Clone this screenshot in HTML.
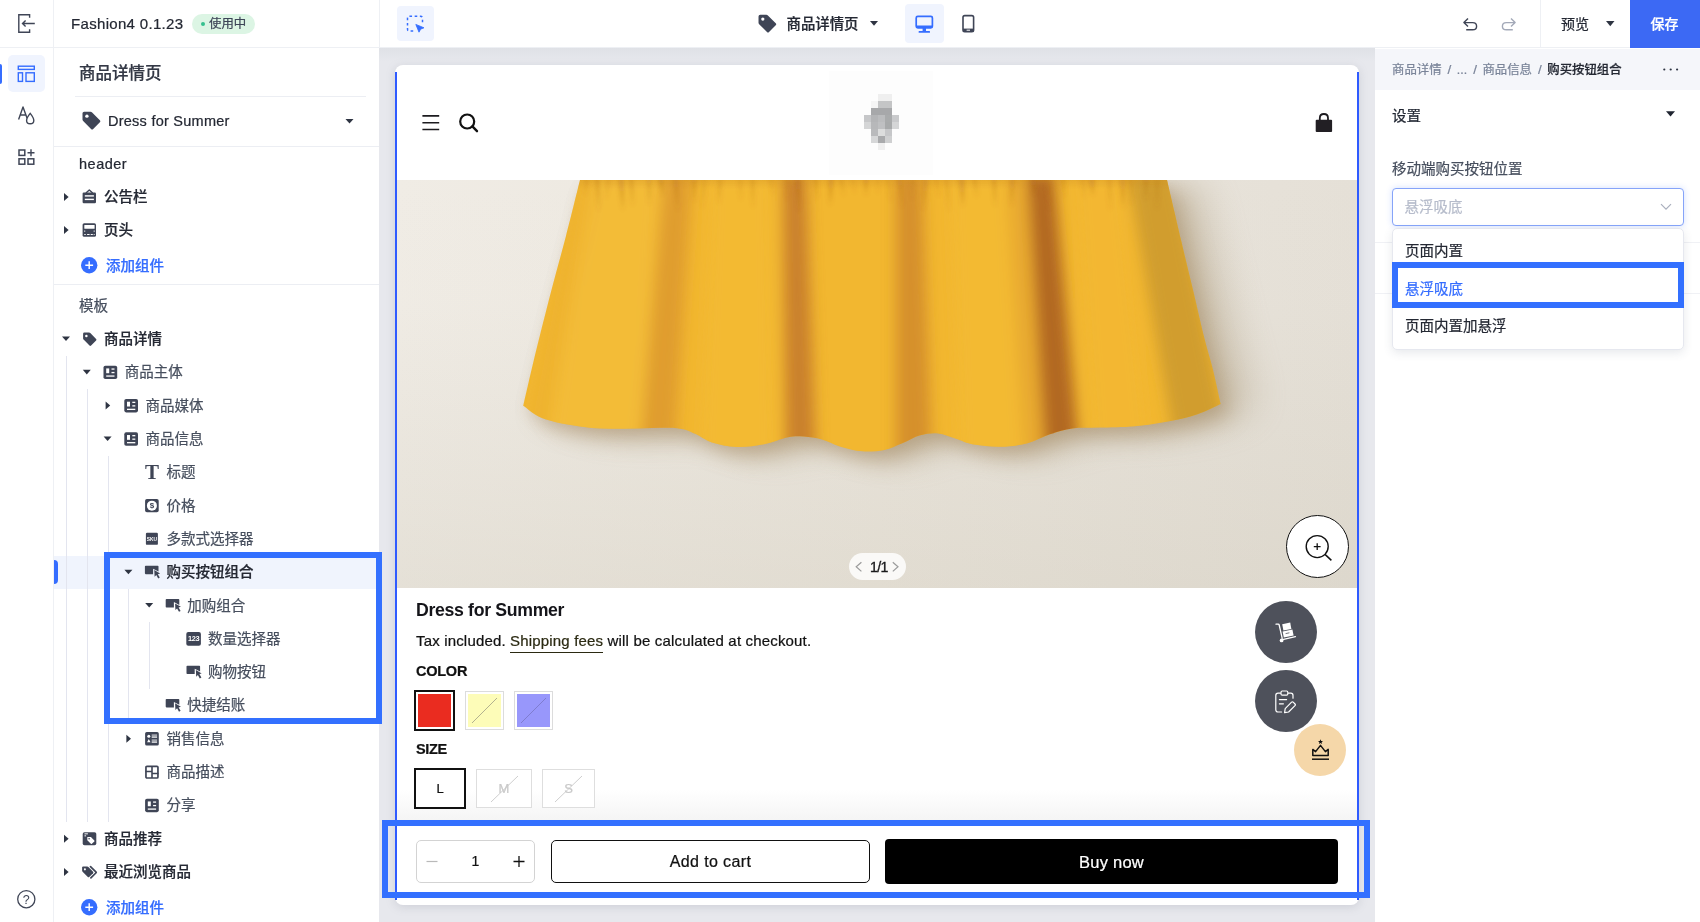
<!DOCTYPE html>
<html lang="zh-CN">
<head>
<meta charset="utf-8">
<title>商品详情页</title>
<style>
*{box-sizing:border-box;margin:0;padding:0}
html,body{width:1700px;height:922px;overflow:hidden;background:#fff}
body{-webkit-text-stroke:.22px currentColor;font-family:"Liberation Sans","Noto Sans CJK SC",sans-serif;color:#242833;font-size:14px;position:relative;-webkit-font-smoothing:antialiased}
#root{position:absolute;left:0;top:0;width:1700px;height:922px;will-change:transform;transform:translateZ(0)}
.abs{position:absolute}
.t{position:absolute;white-space:nowrap;line-height:20px;height:20px}
svg{position:absolute;overflow:visible}
/* ---------- shell ---------- */
#topbar{left:0;top:0;width:1700px;height:48px;background:#fff;border-bottom:1px solid #eef0f4;z-index:5}
#rail{left:0;top:48px;width:54px;height:874px;background:#fff;border-right:1px solid #eef0f4}
#panel{left:54px;top:48px;width:325px;height:874px;background:#fff}
#canvas{left:379px;top:48px;width:996px;height:874px;background:#e7e8ed}
#right{left:1375px;top:48px;width:325px;height:874px;background:#fff}
.hl{position:absolute;border:6px solid #3370ff;pointer-events:none}
/* tree */
.row{position:absolute;left:54px;width:325px;height:33px}
.row .t{top:6.5px;font-size:14.5px}
.lbl{color:#242833}
.g{position:absolute;width:1px;background:#e3e5ef}
</style>
</head>
<body>
<div id="root">
<!-- ================= TOP BAR ================= -->
<div id="topbar" class="abs">
  <div class="abs" style="left:53px;top:0;width:1px;height:48px;background:#eef0f4"></div>
  <div class="abs" style="left:379px;top:0;width:1px;height:48px;background:#eef0f4"></div>
  <div class="t" id="ttl" style="left:71px;top:14px;font-size:15px;color:#242833;letter-spacing:.32px">Fashion4 0.1.23</div>
  <div class="abs" id="badge" style="left:192px;top:14px;width:63px;height:20px;border-radius:10px;background:#dcf5e4"></div>
  <div class="abs" style="left:200.5px;top:22px;width:4px;height:4px;border-radius:2px;background:#35c08e"></div>
  <div class="t" style="left:209px;top:13.5px;font-size:12.4px;color:#3d4557">使用中</div>
  <div class="abs" style="left:397px;top:5.5px;width:37px;height:35.5px;border-radius:4px;background:#f0f4fe"></div>
  <div class="t" style="left:786.5px;top:13.5px;font-size:14.4px;font-weight:500;color:#242833">商品详情页</div>
  <div class="abs" style="left:905px;top:4px;width:39px;height:39px;border-radius:4px;background:#f0f4fe"></div>
  <div class="abs" style="left:1540px;top:0;width:1px;height:48px;background:#eef0f4"></div>
  <div class="t" style="left:1561px;top:14px;font-size:14px;color:#242833">预览</div>
  <div class="abs" style="left:1630px;top:0;width:70px;height:48px;background:#3c69f4"></div>
  <div class="t" style="left:1650.5px;top:14px;font-size:14px;font-weight:500;color:#fff">保存</div>
<!--TOPICONS-->
<svg style="left:17px;top:13px" width="20" height="22" viewBox="17 13 20 22"><path d="M29.6 17.8V14.8H18.8V32.2H29.6V29.2" fill="none" stroke="#3f4556" stroke-width="1.4"/><path d="M34.8 23.5H22.6M25.6 20.4L22.5 23.5L25.6 26.6" fill="none" stroke="#3f4556" stroke-width="1.4"/></svg>
<svg style="left:405px;top:14px" width="20" height="20" viewBox="405 14 20 20"><path d="M413.6 31.1H409.6Q407.5 31.1 407.5 29V18.3Q407.5 16.2 409.6 16.2H420.4Q422.5 16.2 422.5 18.3V23.4" fill="none" stroke="#356dff" stroke-width="1.5" stroke-dasharray="2.6 2.6" stroke-dashoffset="-.4"/><path d="M415.8 24.4L424 27.8L420.6 29.2L419 32.2Z" fill="#f0f4fe" stroke="#f0f4fe" stroke-width="3" stroke-linejoin="round"/><path d="M415.8 24.4L424 27.8L420.6 29.2L419 32.2Z" fill="#356dff" stroke="#356dff" stroke-width=".8" stroke-linejoin="round"/></svg>
<svg style="left:757px;top:13px" width="20.26" height="20.26" viewBox="0 -0.22 16 16"><path d="M1.2 2.6Q1.2 1.2 2.6 1.2H7.4Q8.1 1.2 8.6 1.7L14.8 7.9Q15.6 8.7 14.8 9.5L9.5 14.8Q8.7 15.6 7.9 14.8L1.7 8.6Q1.2 8.1 1.2 7.4Z" fill="#3f4556"/><circle cx="4.6" cy="4.6" r="1.3" fill="#fff"/></svg>
<svg style="left:870px;top:21px" width="8" height="5" viewBox="0 0 8 5"><path d="M0 0H8L4 4.8Z" fill="#2e3442"/></svg>
<svg style="left:915px;top:14.5px" width="19" height="19" viewBox="915 14.5 19 19"><rect x="916.2" y="15.8" width="16.2" height="11.6" rx="1.6" fill="none" stroke="#356dff" stroke-width="1.7"/><rect x="916.2" y="25" width="16.2" height="2.4" fill="#356dff"/><rect x="922.6" y="27.4" width="3.4" height="3.4" fill="#356dff"/><rect x="918.6" y="30.6" width="11.4" height="1.7" rx=".6" fill="#356dff"/></svg>
<svg style="left:961px;top:14px" width="14" height="20" viewBox="961 14 14 20"><rect x="963" y="15.6" width="10.6" height="16.2" rx="1.7" fill="none" stroke="#3f4556" stroke-width="1.6"/><rect x="963" y="28.6" width="10.6" height="3.2" fill="#3f4556"/><rect x="966.6" y="29.7" width="3.4" height="1" fill="#fff"/></svg>
<svg style="left:1462px;top:16px" width="17" height="16" viewBox="0 0 17 16"><path d="M4.2 13.8H10.6Q14.6 13.8 14.6 10.2Q14.6 6.6 10.6 6.6H2.4M6 2.4L1.9 6.6L6 10.6" fill="none" stroke="#3f4556" stroke-width="1.4" stroke-linejoin="round"/></svg>
<svg style="left:1500px;top:16px" width="17" height="16" viewBox="0 0 17 16"><path d="M12.8 13.8H6.4Q2.4 13.8 2.4 10.2Q2.4 6.6 6.4 6.6H14.6M11 2.4L15.1 6.6L11 10.6" fill="none" stroke="#a3a9b8" stroke-width="1.4" stroke-linejoin="round"/></svg>
<svg style="left:1606px;top:21px" width="8.5" height="5.5" viewBox="0 0 8 5"><path d="M0 0H8L4 4.8Z" fill="#2e3442"/></svg>
<!--/TOPICONS-->
</div>

<!-- ================= LEFT RAIL ================= -->
<div id="rail" class="abs">
  <div class="abs" style="left:0;top:16px;width:2px;height:20px;background:#356dff;border-radius:0 2px 2px 0"></div>
  <div class="abs" style="left:8px;top:7px;width:37px;height:37px;border-radius:5px;background:#f0f4fe"></div>
</div>

<div class="abs" style="left:0;top:0;width:0;height:0"><!--RAILICONS-->
<svg style="left:17px;top:65px" width="19" height="18" viewBox="17 65 19 18"><rect x="18.3" y="66.2" width="16" height="3.2" fill="none" stroke="#356dff" stroke-width="1.4"/><rect x="18.3" y="72.8" width="4.2" height="8.6" fill="none" stroke="#356dff" stroke-width="1.4"/><rect x="26" y="72.8" width="8.3" height="8.6" fill="none" stroke="#356dff" stroke-width="1.4"/></svg>
<svg style="left:17px;top:105px" width="19" height="21" viewBox="17 105 19 21"><path d="M18.6 119.4L23 107L27.2 118.6M20.2 115H25.8" fill="none" stroke="#3f4556" stroke-width="1.4" stroke-linejoin="round"/><path d="M30.2 113.4Q26.6 117.8 26.6 120.4Q26.6 123.8 30.2 123.8Q33.8 123.8 33.8 120.4Q33.8 117.8 30.2 113.4Z" fill="#fff" stroke="#3f4556" stroke-width="1.4"/></svg>
<svg style="left:17px;top:148px" width="19" height="18" viewBox="17 148 19 18"><rect x="19" y="150" width="5.8" height="5.4" fill="none" stroke="#3f4556" stroke-width="1.5"/><rect x="19" y="158.8" width="5.8" height="5.4" fill="none" stroke="#3f4556" stroke-width="1.5"/><rect x="28" y="158.8" width="5.8" height="5.4" fill="none" stroke="#3f4556" stroke-width="1.5"/><path d="M31 149.2V156.2M27.5 152.7H34.5" stroke="#3f4556" stroke-width="1.4"/></svg>
<svg style="left:16px;top:889px" width="21" height="21" viewBox="16 889 21 21"><circle cx="26.3" cy="899.2" r="8.6" fill="none" stroke="#3f4556" stroke-width="1.3"/><text x="26.3" y="903.6" text-anchor="middle" font-size="12.5" fill="#3f4556" font-family="Liberation Sans,sans-serif">?</text></svg>
<!--/RAILICONS--></div>

<!-- ================= LEFT PANEL ================= -->
<div id="panel" class="abs"></div>
<div id="panelc" class="abs" style="left:0;top:0;width:0;height:0">
<div class="t" style="left:79px;top:63px;font-size:16.5px;font-weight:500;color:#333845">商品详情页</div>
<div class="abs" style="left:75px;top:96px;width:291px;height:1px;background:#eceef3"></div>
<svg style="left:80px;top:109px" width="21.4" height="21.4" viewBox="-0.27 -0.45 16 16"><path d="M1.6 2.8Q1.6 1.6 2.8 1.6H7.6Q8.3 1.6 8.8 2.1L14.6 7.9Q15.4 8.7 14.6 9.5L9.6 14.5Q8.8 15.3 8 14.5L2.1 8.6Q1.6 8.1 1.6 7.4Z" fill="#3f4556"/><circle cx="4.9" cy="4.9" r="1.25" fill="#fff"/></svg>
<div class="t" style="left:108px;top:111px;font-size:14.5px;color:#242833;letter-spacing:.25px">Dress for Summer</div>
<svg style="left:345px;top:119px" width="10" height="10" viewBox="0 0 10 10"><path transform="translate(0.50,0.00)" d="M0 0H8L4 4.6Z" fill="#2e3442"/></svg>
<div class="abs" style="left:54px;top:146px;width:325px;height:1px;background:#eceef3"></div>
<div class="t" style="left:79px;top:153.5px;font-size:14.5px;color:#242833;letter-spacing:.5px">header</div>
<svg style="left:64px;top:193px" width="10" height="10" viewBox="0 0 10 10"><path transform="translate(0.00,0.00)" d="M0 0V8L4.6 4Z" fill="#2e3442"/></svg>
<svg style="left:81px;top:189px" width="18" height="18" viewBox="0 0 18 18"><g transform="translate(0.50,0.00)"><path d="M4.4 4L7.8 1L11.2 4" fill="none" stroke="#3f4556" stroke-width="1.4" stroke-linejoin="round"/><rect x="1.1" y="3.5" width="13.4" height="10.8" rx="1.2" fill="#3f4556"/><rect x="3.3" y="6.2" width="9.1" height="1.4" fill="#fff"/><rect x="3.3" y="9.7" width="9.1" height="1.4" fill="#fff"/></g></svg>
<div class="t" style="left:104.0px;top:187.0px;font-size:14.5px;font-weight:500;color:#242833">公告栏</div>
<svg style="left:64px;top:226px" width="10" height="10" viewBox="0 0 10 10"><path transform="translate(0.00,0.00)" d="M0 0V8L4.6 4Z" fill="#2e3442"/></svg>
<svg style="left:81px;top:222px" width="18" height="18" viewBox="0 0 18 18"><g transform="translate(0.50,0.00)"><rect x="1.1" y="1.2" width="13.4" height="13.6" rx="1.6" fill="#3f4556"/><rect x="2.8" y="3.1" width="10.3" height="3.7" rx=".5" fill="#fff"/><rect x="2.8" y="8.5" width=".9" height="1.3" fill="#fff"/><rect x="12.2" y="8.5" width=".9" height="1.3" fill="#fff"/><rect x="2.8" y="12" width="1.4" height="1" fill="#fff"/><rect x="5.6" y="12" width="2.5" height="1" fill="#fff"/><rect x="9.2" y="12" width="2.1" height="1" fill="#fff"/><rect x="12.2" y="12" width=".9" height="1" fill="#fff"/></g></svg>
<div class="t" style="left:104.0px;top:220.0px;font-size:14.5px;font-weight:500;color:#242833">页头</div>
<svg style="left:81px;top:257.4px" width="16.4" height="16.4" viewBox="0 0 16 16"><circle cx="8" cy="8" r="8" fill="#356dff"/><path d="M8 4.2V11.8M4.2 8H11.8" stroke="#fff" stroke-width="1.4"/></svg>
<div class="t" style="left:106px;top:255.7px;font-size:14.5px;font-weight:500;color:#356dff">添加组件</div>
<div class="abs" style="left:54px;top:284px;width:325px;height:1px;background:#eceef3"></div>
<div class="t" style="left:79px;top:295.6px;font-size:14.5px;color:#474f5e">模板</div>
<div class="abs" style="left:54px;top:556px;width:325px;height:33px;background:#f0f4fd"></div>
<div class="abs" style="left:54px;top:560px;width:4px;height:24px;background:#356dff;border-radius:0 4px 4px 0"></div>
<div class="g" style="left:66.0px;top:356px;height:466px"></div>
<div class="g" style="left:86.8px;top:389px;height:433px"></div>
<div class="g" style="left:107.6px;top:456px;height:366px"></div>
<div class="g" style="left:128.4px;top:589px;height:129px"></div>
<div class="g" style="left:149.2px;top:622px;height:67px"></div>
<svg style="left:62px;top:336px" width="10" height="10" viewBox="0 0 10 10"><path transform="translate(0.00,0.50)" d="M0 0H8L4 4.6Z" fill="#2e3442"/></svg>
<svg style="left:81px;top:331px" width="18" height="18" viewBox="0 0 18 18"><g transform="translate(0.50,0.00)"><path d="M1.6 2.8Q1.6 1.6 2.8 1.6H7.6Q8.3 1.6 8.8 2.1L14.6 7.9Q15.4 8.7 14.6 9.5L9.6 14.5Q8.8 15.3 8 14.5L2.1 8.6Q1.6 8.1 1.6 7.4Z" fill="#3f4556"/><circle cx="4.9" cy="4.9" r="1.25" fill="#fff"/></g></svg>
<div class="t" style="left:104.0px;top:329.0px;font-size:14.5px;font-weight:500;color:#242833">商品详情</div>
<svg style="left:82px;top:369px" width="10" height="10" viewBox="0 0 10 10"><path transform="translate(0.80,0.81)" d="M0 0H8L4 4.6Z" fill="#2e3442"/></svg>
<svg style="left:102px;top:364px" width="18" height="18" viewBox="0 0 18 18"><g transform="translate(0.30,0.31)"><rect x="1.2" y="1.4" width="13.7" height="13.4" rx="1.8" fill="#3f4556"/><rect x="3.9" y="4.1" width="3" height="4.8" fill="#fff"/><rect x="9.2" y="4.1" width="3" height="1.3" fill="#fff"/><rect x="9.2" y="7.6" width="3" height="1.3" fill="#fff"/><rect x="3.9" y="11.1" width="8.3" height="1.3" fill="#fff"/></g></svg>
<div class="t" style="left:124.8px;top:362.3px;font-size:14.5px;color:#474f5e">商品主体</div>
<svg style="left:105px;top:401px" width="10" height="10" viewBox="0 0 10 10"><path transform="translate(0.60,0.62)" d="M0 0V8L4.6 4Z" fill="#2e3442"/></svg>
<svg style="left:123px;top:397px" width="18" height="18" viewBox="0 0 18 18"><g transform="translate(0.10,0.62)"><rect x="1.2" y="1.4" width="13.7" height="13.4" rx="1.8" fill="#3f4556"/><rect x="3.9" y="4.1" width="3" height="4.8" fill="#fff"/><rect x="9.2" y="4.1" width="3" height="1.3" fill="#fff"/><rect x="9.2" y="7.6" width="3" height="1.3" fill="#fff"/><rect x="3.9" y="11.1" width="8.3" height="1.3" fill="#fff"/></g></svg>
<div class="t" style="left:145.6px;top:395.6px;font-size:14.5px;color:#474f5e">商品媒体</div>
<svg style="left:103px;top:436px" width="10" height="10" viewBox="0 0 10 10"><path transform="translate(0.60,0.43)" d="M0 0H8L4 4.6Z" fill="#2e3442"/></svg>
<svg style="left:123px;top:430px" width="18" height="18" viewBox="0 0 18 18"><g transform="translate(0.10,0.93)"><rect x="1.2" y="1.4" width="13.7" height="13.4" rx="1.8" fill="#3f4556"/><rect x="3.9" y="4.1" width="3" height="4.8" fill="#fff"/><rect x="9.2" y="4.1" width="3" height="1.3" fill="#fff"/><rect x="9.2" y="7.6" width="3" height="1.3" fill="#fff"/><rect x="3.9" y="11.1" width="8.3" height="1.3" fill="#fff"/></g></svg>
<div class="t" style="left:145.6px;top:428.9px;font-size:14.5px;color:#474f5e">商品信息</div>
<svg style="left:143px;top:464px" width="18" height="18" viewBox="0 0 18 18"><g transform="translate(0.90,0.24)"><text x="8" y="15" font-size="21" font-weight="700" text-anchor="middle" fill="#3f4556" font-family="Liberation Serif,serif">T</text></g></svg>
<div class="t" style="left:166.4px;top:462.2px;font-size:14.5px;color:#474f5e">标题</div>
<svg style="left:143px;top:497px" width="18" height="18" viewBox="0 0 18 18"><g transform="translate(0.90,0.55)"><rect x="1.2" y="1.5" width="13.6" height="13.2" rx="1.8" fill="#3f4556"/><circle cx="8" cy="8.1" r="5" fill="#fff"/><text x="8" y="10.9" font-size="8" font-weight="700" text-anchor="middle" fill="#3f4556" font-family="Liberation Sans,sans-serif">$</text></g></svg>
<div class="t" style="left:166.4px;top:495.6px;font-size:14.5px;color:#474f5e">价格</div>
<svg style="left:143px;top:530px" width="18" height="18" viewBox="0 0 18 18"><g transform="translate(0.90,0.86)"><rect x="2" y="2" width="12" height="12" rx="1.2" fill="#3f4556"/><text x="8" y="9.7" font-size="4.8" font-weight="700" text-anchor="middle" fill="#fff" font-family="Liberation Sans,sans-serif">SKU</text></g></svg>
<div class="t" style="left:166.4px;top:528.9px;font-size:14.5px;color:#474f5e">多款式选择器</div>
<svg style="left:124px;top:569px" width="10" height="10" viewBox="0 0 10 10"><path transform="translate(0.40,0.67)" d="M0 0H8L4 4.6Z" fill="#2e3442"/></svg>
<svg style="left:143px;top:564px" width="18" height="18" viewBox="0 0 18 18"><g transform="translate(0.90,0.17)"><path d="M1.8 1.6H13.8Q14.6 1.6 14.6 2.4V7.4L9.2 4.6V10H1.8Q1 10 1 9.2V2.4Q1 1.6 1.8 1.6Z" fill="#3f4556"/><path d="M10.4 5.9L16.2 9.3L13.9 10L15.9 13.4L14.3 14.3L12.4 10.9L10.7 12.6Z" fill="#3f4556"/></g></svg>
<div class="t" style="left:166.4px;top:562.2px;font-size:14.5px;font-weight:500;color:#242833">购买按钮组合</div>
<svg style="left:145px;top:602px" width="10" height="10" viewBox="0 0 10 10"><path transform="translate(0.20,0.98)" d="M0 0H8L4 4.6Z" fill="#2e3442"/></svg>
<svg style="left:164px;top:597px" width="18" height="18" viewBox="0 0 18 18"><g transform="translate(0.70,0.48)"><path d="M1.8 1.6H13.8Q14.6 1.6 14.6 2.4V7.4L9.2 4.6V10H1.8Q1 10 1 9.2V2.4Q1 1.6 1.8 1.6Z" fill="#3f4556"/><path d="M10.4 5.9L16.2 9.3L13.9 10L15.9 13.4L14.3 14.3L12.4 10.9L10.7 12.6Z" fill="#3f4556"/></g></svg>
<div class="t" style="left:187.2px;top:595.5px;font-size:14.5px;color:#474f5e">加购组合</div>
<svg style="left:185px;top:630px" width="18" height="18" viewBox="0 0 18 18"><g transform="translate(0.50,0.79)"><rect x=".8" y="1.2" width="14.6" height="13.7" rx="2" fill="#3f4556"/><text x="8.1" y="10.7" font-size="7.4" font-weight="700" text-anchor="middle" fill="#fff" font-family="Liberation Sans,sans-serif" letter-spacing="-.3">123</text></g></svg>
<div class="t" style="left:208.0px;top:628.8px;font-size:14.5px;color:#474f5e">数量选择器</div>
<svg style="left:185px;top:664px" width="18" height="18" viewBox="0 0 18 18"><g transform="translate(0.50,0.10)"><path d="M1.8 1.6H13.8Q14.6 1.6 14.6 2.4V7.4L9.2 4.6V10H1.8Q1 10 1 9.2V2.4Q1 1.6 1.8 1.6Z" fill="#3f4556"/><path d="M10.4 5.9L16.2 9.3L13.9 10L15.9 13.4L14.3 14.3L12.4 10.9L10.7 12.6Z" fill="#3f4556"/></g></svg>
<div class="t" style="left:208.0px;top:662.1px;font-size:14.5px;color:#474f5e">购物按钮</div>
<svg style="left:164px;top:697px" width="18" height="18" viewBox="0 0 18 18"><g transform="translate(0.70,0.41)"><path d="M1.8 1.6H13.8Q14.6 1.6 14.6 2.4V7.4L9.2 4.6V10H1.8Q1 10 1 9.2V2.4Q1 1.6 1.8 1.6Z" fill="#3f4556"/><path d="M10.4 5.9L16.2 9.3L13.9 10L15.9 13.4L14.3 14.3L12.4 10.9L10.7 12.6Z" fill="#3f4556"/></g></svg>
<div class="t" style="left:187.2px;top:695.4px;font-size:14.5px;color:#474f5e">快捷结账</div>
<svg style="left:126px;top:734px" width="10" height="10" viewBox="0 0 10 10"><path transform="translate(0.40,0.72)" d="M0 0V8L4.6 4Z" fill="#2e3442"/></svg>
<svg style="left:143px;top:730px" width="18" height="18" viewBox="0 0 18 18"><g transform="translate(0.90,0.72)"><rect x="1.2" y="1.4" width="13.7" height="13.4" rx="1.6" fill="#3f4556"/><circle cx="4.9" cy="5.5" r="1.5" fill="#fff"/><path d="M3.2 11.6L4.9 8.4L6.6 11.6Z" fill="#fff"/><rect x="7.8" y="3.9" width="5.4" height=".9" fill="#fff"/><rect x="7.8" y="5.7" width="5.4" height="1.3" fill="#fff"/><rect x="7.8" y="8.9" width="5.4" height=".9" fill="#fff"/><rect x="7.8" y="10.7" width="5.4" height="1.3" fill="#fff"/></g></svg>
<div class="t" style="left:166.4px;top:728.7px;font-size:14.5px;color:#474f5e">销售信息</div>
<svg style="left:143px;top:764px" width="18" height="18" viewBox="0 0 18 18"><g transform="translate(0.90,0.03)"><rect x="2.05" y="2.25" width="12" height="11.7" rx="1" fill="#fff" stroke="#3f4556" stroke-width="1.7"/><path d="M8.1 2.2V14M1.6 7.4H8.1M8.1 9.4H14.6" stroke="#3f4556" stroke-width="1.6" fill="none"/></g></svg>
<div class="t" style="left:166.4px;top:762.0px;font-size:14.5px;color:#474f5e">商品描述</div>
<svg style="left:143px;top:797px" width="18" height="18" viewBox="0 0 18 18"><g transform="translate(0.90,0.34)"><rect x="1.2" y="1.4" width="13.7" height="13.4" rx="1.8" fill="#3f4556"/><rect x="3.9" y="4.1" width="3" height="4.8" fill="#fff"/><rect x="9.2" y="4.1" width="3" height="1.3" fill="#fff"/><rect x="9.2" y="7.6" width="3" height="1.3" fill="#fff"/><rect x="3.9" y="11.1" width="8.3" height="1.3" fill="#fff"/></g></svg>
<div class="t" style="left:166.4px;top:795.3px;font-size:14.5px;color:#474f5e">分享</div>
<svg style="left:64px;top:834px" width="10" height="10" viewBox="0 0 10 10"><path transform="translate(0.00,0.65)" d="M0 0V8L4.6 4Z" fill="#2e3442"/></svg>
<svg style="left:81px;top:830px" width="18" height="18" viewBox="0 0 18 18"><g transform="translate(0.50,0.65)"><rect x="1.2" y="1.5" width="13.6" height="13.2" rx="1.8" fill="#3f4556"/><path d="M3 3.2H6.4M3 5.2H4.6" stroke="#fff" stroke-width="1"/><path d="M5.8 6.4H9.4L12.8 9.8Q13.2 10.3 12.8 10.8L10.4 13.1Q9.9 13.5 9.4 13.1L5.8 9.6Z" fill="#fff"/><circle cx="7.6" cy="8.1" r=".8" fill="#3f4556"/></g></svg>
<div class="t" style="left:104.0px;top:828.7px;font-size:14.5px;font-weight:500;color:#242833">商品推荐</div>
<svg style="left:64px;top:867px" width="10" height="10" viewBox="0 0 10 10"><path transform="translate(0.00,0.96)" d="M0 0V8L4.6 4Z" fill="#2e3442"/></svg>
<svg style="left:81px;top:863px" width="18" height="18" viewBox="0 0 18 18"><g transform="translate(0.50,0.96)"><path d="M.6 3.6Q.6 2.6 1.6 2.6H5.8Q6.4 2.6 6.9 3.1L11.6 7.8Q12.2 8.5 11.6 9.2L7.7 13.1Q7 13.7 6.3 13.1L1.1 7.9Q.6 7.4 .6 6.8Z" fill="#3f4556"/><circle cx="3.4" cy="5.4" r="1.05" fill="#fff"/><path d="M9 2.6L14.6 8.2Q14.9 8.5 14.6 8.8L9.4 14" fill="none" stroke="#3f4556" stroke-width="1.7" stroke-linecap="round" stroke-linejoin="round"/></g></svg>
<div class="t" style="left:104.0px;top:862.0px;font-size:14.5px;font-weight:500;color:#242833">最近浏览商品</div>
<svg style="left:81px;top:899.4px" width="16.4" height="16.4" viewBox="0 0 16 16"><circle cx="8" cy="8" r="8" fill="#356dff"/><path d="M8 4.2V11.8M4.2 8H11.8" stroke="#fff" stroke-width="1.4"/></svg>
<div class="t" style="left:106px;top:897.7px;font-size:14.5px;font-weight:500;color:#356dff">添加组件</div>
<div class="hl" style="left:104px;top:552px;width:278px;height:172px;z-index:6"></div>
</div>

<!-- ================= CANVAS ================= -->
<div id="canvas" class="abs"></div>
<div class="abs" style="left:379px;top:48px;width:996px;height:14px;background:linear-gradient(#dfe1e6,rgba(231,232,237,0))"></div>
<div id="cv" class="abs" style="left:0;top:0;width:0;height:0;font-family:'Liberation Sans',sans-serif">
<!-- frame -->
<div class="abs" id="frame" style="left:395px;top:65px;width:964px;height:840px;background:#fff;border-radius:8px;box-shadow:0 2px 10px rgba(120,125,140,.22)"></div>
<div class="abs" style="left:395px;top:72px;width:2px;height:828px;background:#2f5bff"></div>
<div class="abs" style="left:1357px;top:72px;width:2px;height:828px;background:#2f5bff"></div>
<!-- fade above sticky bar -->
<div class="abs" style="left:397px;top:790px;width:960px;height:32px;background:linear-gradient(rgba(246,246,246,0),#f4f4f4)"></div>
<!-- store header -->
<div class="abs" style="left:829px;top:71px;width:104px;height:104px;background:#fdfdfd"></div>
<svg style="left:421px;top:114px" width="20" height="18" viewBox="421 114 20 18"><path d="M422.4 115.9H439.2M422.4 122.7H439.2M422.4 129.5H439.2" stroke="#1c1b1f" stroke-width="1.6"/></svg>
<svg style="left:457px;top:111px" width="22" height="22" viewBox="457 111 22 22"><circle cx="467.2" cy="121.5" r="7" fill="none" stroke="#111" stroke-width="2.2"/><path d="M472.4 126.4L477 131.2" stroke="#111" stroke-width="2.4" stroke-linecap="round"/></svg>
<svg id="logo" style="left:864.3px;top:94.2px" width="35" height="56" viewBox="0 0 5 8" shape-rendering="crispEdges">
<rect x="2" y="0" width="2" height="1" fill="#efefef"/>
<rect x="1" y="1" width="1" height="1" fill="#f5f5f5"/><rect x="2" y="1" width="2" height="1" fill="#c4c5c6"/>
<rect x="1" y="2" width="3" height="1" fill="#a7a8aa"/>
<rect x="0" y="3" width="1" height="1" fill="#c6c7c9"/><rect x="1" y="3" width="1" height="1" fill="#b4b5b7"/><rect x="2" y="3" width="1" height="1" fill="#bbbcbe"/><rect x="3" y="3" width="1" height="1" fill="#a9abac"/><rect x="4" y="3" width="1" height="1" fill="#c9cacc"/>
<rect x="0" y="4" width="1" height="1" fill="#d4d5d6"/><rect x="1" y="4" width="1" height="1" fill="#b7b8ba"/><rect x="2" y="4" width="1" height="1" fill="#bfc0c2"/><rect x="3" y="4" width="1" height="1" fill="#a8aaab"/><rect x="4" y="4" width="1" height="1" fill="#d5d6d7"/>
<rect x="1" y="5" width="1" height="1" fill="#b9babc"/><rect x="2" y="5" width="1" height="1" fill="#dcdddd"/><rect x="3" y="5" width="1" height="1" fill="#c6c7c9"/>
<rect x="1" y="6" width="1" height="1" fill="#d6d7d8"/><rect x="2" y="6" width="1" height="1" fill="#a9aaac"/><rect x="3" y="6" width="1" height="1" fill="#cfd0d1"/>
<rect x="2" y="7" width="1" height="1" fill="#efefef"/>
</svg>
<svg style="left:1313px;top:111px" width="22" height="23" viewBox="1313 111 22 23"><path d="M1319.8 120.5V118.2Q1319.8 114 1323.9 114Q1328 114 1328 118.2V120.5" fill="none" stroke="#1d1b20" stroke-width="1.8"/><rect x="1315.7" y="119.8" width="16.4" height="12.3" rx="1" fill="#221f24"/></svg>
<!-- product image -->
<!--DRESS-->
<svg id="dress" style="left:397px;top:180px" width="960" height="408" viewBox="397 180 960 408">
<defs>
<linearGradient id="bgx" x1="0" y1="0" x2="1" y2="0"><stop offset="0" stop-color="#f0ece5"/><stop offset=".5" stop-color="#ebe6dd"/><stop offset="1" stop-color="#e5e0d7"/></linearGradient>
<linearGradient id="bgy" x1="0" y1="0" x2="0" y2="1"><stop offset="0" stop-color="#c8c2b2" stop-opacity="0"/><stop offset=".3" stop-color="#c8c2b2" stop-opacity="0.02"/><stop offset="1" stop-color="#c8c2b2" stop-opacity=".28"/></linearGradient>
<linearGradient id="topg" x1="0" y1="0" x2="0" y2="1"><stop offset="0" stop-color="#9a5218" stop-opacity=".12"/><stop offset="1" stop-color="#9a5218" stop-opacity="0"/></linearGradient>
<filter id="b6" x="-20%" y="-20%" width="140%" height="140%"><feGaussianBlur stdDeviation="7"/></filter>
<filter id="b3" x="-20%" y="-20%" width="140%" height="140%"><feGaussianBlur stdDeviation="2.2"/></filter>
<filter id="b18" x="-20%" y="-20%" width="140%" height="140%"><feGaussianBlur stdDeviation="18"/></filter>
<filter id="b10" x="-20%" y="-20%" width="140%" height="140%"><feGaussianBlur stdDeviation="11"/></filter>
<clipPath id="dclip"><path d="M580,180L1167,180C1169.3,190.0 1176.7,221.7 1181.0,240.0C1185.3,258.3 1189.2,274.2 1193.0,290.0C1196.8,305.8 1200.2,321.7 1203.5,335.0C1206.8,348.3 1210.2,358.5 1213.0,370.0C1215.8,381.5 1219.3,398.2 1220.6,403.9C1216.7,405.6 1205.7,411.4 1197.4,414.2C1189.1,417.0 1181.0,418.9 1170.6,420.9C1160.2,422.9 1146.7,425.1 1134.8,426.2C1122.9,427.3 1109.4,427.2 1099.0,427.6C1088.6,428.0 1080.4,427.4 1072.2,428.5C1064.0,429.6 1057.4,431.9 1049.9,434.3C1042.5,436.8 1035.7,441.1 1027.5,443.2C1019.3,445.3 1009.6,446.6 1000.7,446.8C991.8,447.0 981.4,445.9 973.9,444.6C966.4,443.3 962.0,440.7 956.0,438.8C950.0,436.9 944.1,434.0 938.1,433.4C932.1,432.8 926.2,433.6 920.2,435.2C914.2,436.8 908.3,440.8 902.3,443.2C896.3,445.6 891.1,448.5 884.4,449.9C877.7,451.2 869.5,451.9 862.1,451.3C854.7,450.7 846.4,448.4 839.7,446.4C833.0,444.4 827.9,441.1 821.9,439.5C815.9,437.9 809.6,437.0 804.0,436.6C798.4,436.2 794.7,435.9 788.0,437.2C781.3,438.5 772.5,442.6 764.0,444.2C755.5,445.8 745.7,447.3 737.0,447.0C728.3,446.7 719.0,444.6 712.0,442.4C705.0,440.2 700.8,436.2 695.0,433.8C689.2,431.4 686.8,429.1 677.0,428.2C667.2,427.3 650.2,428.4 636.0,428.4C621.8,428.4 607.0,429.5 592.0,428.0C577.0,426.5 557.5,423.3 546.0,419.6C534.5,415.9 527.0,408.1 523.2,405.8C524.5,400.2 528.2,383.8 531.0,372.0C533.8,360.2 536.5,349.0 540.0,335.0C543.5,321.0 547.7,304.5 552.0,288.0C556.3,271.5 561.3,254.0 566.0,236.0C570.7,218.0 577.7,189.3 580.0,180.0Z"/></clipPath>
<clipPath id="iclip"><rect x="397" y="180" width="960" height="408"/></clipPath>
</defs>
<g clip-path="url(#iclip)">
<rect x="397" y="180" width="960" height="408" fill="url(#bgx)"/>
<rect x="397" y="180" width="960" height="408" fill="url(#bgy)"/>
<path d="M580,180L1167,180C1169.3,190.0 1176.7,221.7 1181.0,240.0C1185.3,258.3 1189.2,274.2 1193.0,290.0C1196.8,305.8 1200.2,321.7 1203.5,335.0C1206.8,348.3 1210.2,358.5 1213.0,370.0C1215.8,381.5 1219.3,398.2 1220.6,403.9C1216.7,405.6 1205.7,411.4 1197.4,414.2C1189.1,417.0 1181.0,418.9 1170.6,420.9C1160.2,422.9 1146.7,425.1 1134.8,426.2C1122.9,427.3 1109.4,427.2 1099.0,427.6C1088.6,428.0 1080.4,427.4 1072.2,428.5C1064.0,429.6 1057.4,431.9 1049.9,434.3C1042.5,436.8 1035.7,441.1 1027.5,443.2C1019.3,445.3 1009.6,446.6 1000.7,446.8C991.8,447.0 981.4,445.9 973.9,444.6C966.4,443.3 962.0,440.7 956.0,438.8C950.0,436.9 944.1,434.0 938.1,433.4C932.1,432.8 926.2,433.6 920.2,435.2C914.2,436.8 908.3,440.8 902.3,443.2C896.3,445.6 891.1,448.5 884.4,449.9C877.7,451.2 869.5,451.9 862.1,451.3C854.7,450.7 846.4,448.4 839.7,446.4C833.0,444.4 827.9,441.1 821.9,439.5C815.9,437.9 809.6,437.0 804.0,436.6C798.4,436.2 794.7,435.9 788.0,437.2C781.3,438.5 772.5,442.6 764.0,444.2C755.5,445.8 745.7,447.3 737.0,447.0C728.3,446.7 719.0,444.6 712.0,442.4C705.0,440.2 700.8,436.2 695.0,433.8C689.2,431.4 686.8,429.1 677.0,428.2C667.2,427.3 650.2,428.4 636.0,428.4C621.8,428.4 607.0,429.5 592.0,428.0C577.0,426.5 557.5,423.3 546.0,419.6C534.5,415.9 527.0,408.1 523.2,405.8C524.5,400.2 528.2,383.8 531.0,372.0C533.8,360.2 536.5,349.0 540.0,335.0C543.5,321.0 547.7,304.5 552.0,288.0C556.3,271.5 561.3,254.0 566.0,236.0C570.7,218.0 577.7,189.3 580.0,180.0Z" transform="translate(34,4)" fill="#9a8560" opacity=".3" filter="url(#b18)"/>
<path d="M580,180L1167,180C1169.3,190.0 1176.7,221.7 1181.0,240.0C1185.3,258.3 1189.2,274.2 1193.0,290.0C1196.8,305.8 1200.2,321.7 1203.5,335.0C1206.8,348.3 1210.2,358.5 1213.0,370.0C1215.8,381.5 1219.3,398.2 1220.6,403.9C1216.7,405.6 1205.7,411.4 1197.4,414.2C1189.1,417.0 1181.0,418.9 1170.6,420.9C1160.2,422.9 1146.7,425.1 1134.8,426.2C1122.9,427.3 1109.4,427.2 1099.0,427.6C1088.6,428.0 1080.4,427.4 1072.2,428.5C1064.0,429.6 1057.4,431.9 1049.9,434.3C1042.5,436.8 1035.7,441.1 1027.5,443.2C1019.3,445.3 1009.6,446.6 1000.7,446.8C991.8,447.0 981.4,445.9 973.9,444.6C966.4,443.3 962.0,440.7 956.0,438.8C950.0,436.9 944.1,434.0 938.1,433.4C932.1,432.8 926.2,433.6 920.2,435.2C914.2,436.8 908.3,440.8 902.3,443.2C896.3,445.6 891.1,448.5 884.4,449.9C877.7,451.2 869.5,451.9 862.1,451.3C854.7,450.7 846.4,448.4 839.7,446.4C833.0,444.4 827.9,441.1 821.9,439.5C815.9,437.9 809.6,437.0 804.0,436.6C798.4,436.2 794.7,435.9 788.0,437.2C781.3,438.5 772.5,442.6 764.0,444.2C755.5,445.8 745.7,447.3 737.0,447.0C728.3,446.7 719.0,444.6 712.0,442.4C705.0,440.2 700.8,436.2 695.0,433.8C689.2,431.4 686.8,429.1 677.0,428.2C667.2,427.3 650.2,428.4 636.0,428.4C621.8,428.4 607.0,429.5 592.0,428.0C577.0,426.5 557.5,423.3 546.0,419.6C534.5,415.9 527.0,408.1 523.2,405.8C524.5,400.2 528.2,383.8 531.0,372.0C533.8,360.2 536.5,349.0 540.0,335.0C543.5,321.0 547.7,304.5 552.0,288.0C556.3,271.5 561.3,254.0 566.0,236.0C570.7,218.0 577.7,189.3 580.0,180.0Z" transform="translate(12,11)" fill="#9a7b4e" opacity=".36" filter="url(#b10)"/>
<path d="M580,180L1167,180C1169.3,190.0 1176.7,221.7 1181.0,240.0C1185.3,258.3 1189.2,274.2 1193.0,290.0C1196.8,305.8 1200.2,321.7 1203.5,335.0C1206.8,348.3 1210.2,358.5 1213.0,370.0C1215.8,381.5 1219.3,398.2 1220.6,403.9C1216.7,405.6 1205.7,411.4 1197.4,414.2C1189.1,417.0 1181.0,418.9 1170.6,420.9C1160.2,422.9 1146.7,425.1 1134.8,426.2C1122.9,427.3 1109.4,427.2 1099.0,427.6C1088.6,428.0 1080.4,427.4 1072.2,428.5C1064.0,429.6 1057.4,431.9 1049.9,434.3C1042.5,436.8 1035.7,441.1 1027.5,443.2C1019.3,445.3 1009.6,446.6 1000.7,446.8C991.8,447.0 981.4,445.9 973.9,444.6C966.4,443.3 962.0,440.7 956.0,438.8C950.0,436.9 944.1,434.0 938.1,433.4C932.1,432.8 926.2,433.6 920.2,435.2C914.2,436.8 908.3,440.8 902.3,443.2C896.3,445.6 891.1,448.5 884.4,449.9C877.7,451.2 869.5,451.9 862.1,451.3C854.7,450.7 846.4,448.4 839.7,446.4C833.0,444.4 827.9,441.1 821.9,439.5C815.9,437.9 809.6,437.0 804.0,436.6C798.4,436.2 794.7,435.9 788.0,437.2C781.3,438.5 772.5,442.6 764.0,444.2C755.5,445.8 745.7,447.3 737.0,447.0C728.3,446.7 719.0,444.6 712.0,442.4C705.0,440.2 700.8,436.2 695.0,433.8C689.2,431.4 686.8,429.1 677.0,428.2C667.2,427.3 650.2,428.4 636.0,428.4C621.8,428.4 607.0,429.5 592.0,428.0C577.0,426.5 557.5,423.3 546.0,419.6C534.5,415.9 527.0,408.1 523.2,405.8C524.5,400.2 528.2,383.8 531.0,372.0C533.8,360.2 536.5,349.0 540.0,335.0C543.5,321.0 547.7,304.5 552.0,288.0C556.3,271.5 561.3,254.0 566.0,236.0C570.7,218.0 577.7,189.3 580.0,180.0Z" transform="translate(2,6)" fill="#8a6434" opacity=".12" filter="url(#b6)"/>
<path d="M580,180L1167,180C1169.3,190.0 1176.7,221.7 1181.0,240.0C1185.3,258.3 1189.2,274.2 1193.0,290.0C1196.8,305.8 1200.2,321.7 1203.5,335.0C1206.8,348.3 1210.2,358.5 1213.0,370.0C1215.8,381.5 1219.3,398.2 1220.6,403.9C1216.7,405.6 1205.7,411.4 1197.4,414.2C1189.1,417.0 1181.0,418.9 1170.6,420.9C1160.2,422.9 1146.7,425.1 1134.8,426.2C1122.9,427.3 1109.4,427.2 1099.0,427.6C1088.6,428.0 1080.4,427.4 1072.2,428.5C1064.0,429.6 1057.4,431.9 1049.9,434.3C1042.5,436.8 1035.7,441.1 1027.5,443.2C1019.3,445.3 1009.6,446.6 1000.7,446.8C991.8,447.0 981.4,445.9 973.9,444.6C966.4,443.3 962.0,440.7 956.0,438.8C950.0,436.9 944.1,434.0 938.1,433.4C932.1,432.8 926.2,433.6 920.2,435.2C914.2,436.8 908.3,440.8 902.3,443.2C896.3,445.6 891.1,448.5 884.4,449.9C877.7,451.2 869.5,451.9 862.1,451.3C854.7,450.7 846.4,448.4 839.7,446.4C833.0,444.4 827.9,441.1 821.9,439.5C815.9,437.9 809.6,437.0 804.0,436.6C798.4,436.2 794.7,435.9 788.0,437.2C781.3,438.5 772.5,442.6 764.0,444.2C755.5,445.8 745.7,447.3 737.0,447.0C728.3,446.7 719.0,444.6 712.0,442.4C705.0,440.2 700.8,436.2 695.0,433.8C689.2,431.4 686.8,429.1 677.0,428.2C667.2,427.3 650.2,428.4 636.0,428.4C621.8,428.4 607.0,429.5 592.0,428.0C577.0,426.5 557.5,423.3 546.0,419.6C534.5,415.9 527.0,408.1 523.2,405.8C524.5,400.2 528.2,383.8 531.0,372.0C533.8,360.2 536.5,349.0 540.0,335.0C543.5,321.0 547.7,304.5 552.0,288.0C556.3,271.5 561.3,254.0 566.0,236.0C570.7,218.0 577.7,189.3 580.0,180.0Z" fill="#f2b730"/>
<g clip-path="url(#dclip)"><g filter="url(#b6)"><path d="M712,176L770,176L775,462L700,462Z" fill="#f5bd38" opacity="0.4"/><path d="M950,176L1015,176L1030,462L960,462Z" fill="#f5bd38" opacity="0.4"/><path d="M1075,176L1120,176L1150,462L1095,462Z" fill="#f4ba36" opacity="0.3"/><path d="M664,176L692,176L674,462L638,462Z" fill="#d38a2b" opacity="0.58"/><path d="M783,176L806,176L816,462L786,462Z" fill="#bf7329" opacity="0.8"/><path d="M896,176L922,176L932,462L896,462Z" fill="#c87e2a" opacity="0.68"/><path d="M1028,176L1054,176L1080,462L1046,462Z" fill="#a85c22" opacity="0.86"/><path d="M1006,176L1028,176L1046,462L1024,462Z" fill="#d9942c" opacity="0.4"/><path d="M1128,176L1175,176L1232,462L1178,462Z" fill="#c4932e" opacity="0.72"/><path d="M590,176L660,176L640,462L545,462Z" fill="#f6c343" opacity="0.4"/><path d="M575,176L596,176L540,462L520,462Z" fill="#e8a92c" opacity="0.3"/></g><g filter="url(#b3)"><path d="M585,178L589,178L585,196Z" fill="#a55a1e" opacity="0.20"/><path d="M595,178L599,178L599,212Z" fill="#a55a1e" opacity="0.28"/><path d="M606,178L611,178L606,200Z" fill="#a55a1e" opacity="0.15"/><path d="M618,178L624,178L623,211Z" fill="#a55a1e" opacity="0.28"/><path d="M629,178L633,178L633,207Z" fill="#a55a1e" opacity="0.27"/><path d="M647,178L651,178L649,206Z" fill="#a55a1e" opacity="0.25"/><path d="M658,178L663,178L663,196Z" fill="#a55a1e" opacity="0.31"/><path d="M673,178L678,178L678,212Z" fill="#a55a1e" opacity="0.23"/><path d="M692,178L697,178L694,202Z" fill="#a55a1e" opacity="0.24"/><path d="M702,178L707,178L702,210Z" fill="#a55a1e" opacity="0.13"/><path d="M718,178L722,178L719,205Z" fill="#a55a1e" opacity="0.21"/><path d="M738,178L742,178L741,202Z" fill="#a55a1e" opacity="0.16"/><path d="M750,178L755,178L753,209Z" fill="#a55a1e" opacity="0.18"/><path d="M769,178L773,178L773,195Z" fill="#a55a1e" opacity="0.17"/><path d="M785,178L789,178L787,201Z" fill="#a55a1e" opacity="0.16"/><path d="M795,178L800,178L799,212Z" fill="#a55a1e" opacity="0.31"/><path d="M814,178L817,178L817,200Z" fill="#a55a1e" opacity="0.31"/><path d="M828,178L834,178L830,206Z" fill="#a55a1e" opacity="0.28"/><path d="M839,178L843,178L844,197Z" fill="#a55a1e" opacity="0.20"/><path d="M851,178L854,178L855,195Z" fill="#a55a1e" opacity="0.15"/><path d="M864,178L868,178L866,196Z" fill="#a55a1e" opacity="0.32"/><path d="M876,178L879,178L878,195Z" fill="#a55a1e" opacity="0.15"/><path d="M886,178L889,178L891,204Z" fill="#a55a1e" opacity="0.17"/><path d="M897,178L902,178L902,209Z" fill="#a55a1e" opacity="0.20"/><path d="M911,178L915,178L912,202Z" fill="#a55a1e" opacity="0.13"/><path d="M923,178L929,178L923,211Z" fill="#a55a1e" opacity="0.22"/><path d="M934,178L938,178L939,198Z" fill="#a55a1e" opacity="0.17"/><path d="M945,178L948,178L949,213Z" fill="#a55a1e" opacity="0.23"/><path d="M958,178L965,178L963,207Z" fill="#a55a1e" opacity="0.28"/><path d="M973,178L976,178L977,198Z" fill="#a55a1e" opacity="0.29"/><path d="M992,178L996,178L995,207Z" fill="#a55a1e" opacity="0.28"/><path d="M1010,178L1015,178L1011,207Z" fill="#a55a1e" opacity="0.26"/><path d="M1029,178L1036,178L1035,195Z" fill="#a55a1e" opacity="0.31"/><path d="M1045,178L1049,178L1050,212Z" fill="#a55a1e" opacity="0.15"/><path d="M1062,178L1065,178L1064,197Z" fill="#a55a1e" opacity="0.25"/><path d="M1079,178L1086,178L1085,198Z" fill="#a55a1e" opacity="0.12"/><path d="M1088,178L1095,178L1093,196Z" fill="#a55a1e" opacity="0.28"/><path d="M1107,178L1112,178L1110,212Z" fill="#a55a1e" opacity="0.16"/><path d="M1119,178L1126,178L1123,209Z" fill="#a55a1e" opacity="0.21"/><path d="M1129,178L1132,178L1132,206Z" fill="#a55a1e" opacity="0.22"/><path d="M1144,178L1148,178L1146,201Z" fill="#a55a1e" opacity="0.27"/><path d="M1154,178L1160,178L1157,211Z" fill="#a55a1e" opacity="0.14"/></g><rect x="560" y="180" width="640" height="9" fill="url(#topg)"/></g>
</g>
</svg>
<!--/DRESS-->
<!-- pagination pill -->
<div class="abs" style="left:849px;top:553px;width:57px;height:27px;border-radius:14px;background:rgba(255,255,255,.82)"></div>
<svg style="left:854px;top:560px" width="10" height="13" viewBox="854 560 10 13"><path d="M861.4 562.2L856.2 566.8L861.4 571.4" fill="none" stroke="#9b9b9b" stroke-width="1.2"/></svg>
<svg style="left:891px;top:560px" width="10" height="13" viewBox="891 560 10 13"><path d="M892.8 562.2L898 566.8L892.8 571.4" fill="none" stroke="#9b9b9b" stroke-width="1.2"/></svg>
<div class="t" style="left:869.5px;top:557px;font-size:15px;font-weight:400;color:#18181a;letter-spacing:-.7px;-webkit-text-stroke:.35px #18181a;transform:scaleX(.95);transform-origin:0 0">1/1</div>
<!-- zoom btn -->
<div class="abs" style="left:1286px;top:515px;width:63px;height:63px;border-radius:50%;background:#fff;border:1.2px solid #111"></div>
<svg style="left:1304px;top:533px" width="30" height="30" viewBox="1304 533 30 30"><circle cx="1317.2" cy="546.6" r="11" fill="none" stroke="#111" stroke-width="1.4"/><path d="M1325 554.4L1331.4 560.4" stroke="#111" stroke-width="1.5"/><path d="M1317.2 543.2V550M1313.8 546.6H1320.6" stroke="#111" stroke-width="1.3"/></svg>
<!-- product info -->
<div class="t" id="ptitle" style="left:416px;top:598px;height:24px;line-height:24px;font-size:18.5px;font-weight:700;color:#15151a;letter-spacing:-.35px;-webkit-text-stroke:0;transform:scaleX(.957);transform-origin:0 0">Dress for Summer</div>
<div class="t" id="ptax" style="left:416px;top:630.5px;font-size:15px;color:#111;letter-spacing:.17px">Tax included. <span style="color:#2b2a12;border-bottom:1px solid #2b2a12;padding-bottom:3px">Shipping fees</span> will be calculated at checkout.</div>
<div class="t" style="left:416px;top:661px;font-size:14.5px;font-weight:700;color:#111;letter-spacing:-.25px">COLOR</div>
<div class="abs" style="left:414px;top:690px;width:41px;height:41px;border:2px solid #111;background:#fff"></div>
<div class="abs" style="left:418px;top:694px;width:33px;height:33px;background:#ea2c20"></div>
<div class="abs" style="left:465px;top:691px;width:39px;height:39px;border:1px solid #dcdcdc;background:#fff"></div>
<div class="abs" style="left:468px;top:694px;width:33px;height:33px;background:#fdfcb8"></div>
<svg style="left:468px;top:694px" width="33" height="33"><path d="M4 29L29 4" stroke="#a9a88a" stroke-width=".9"/></svg>
<div class="abs" style="left:514px;top:691px;width:39px;height:39px;border:1px solid #dcdcdc;background:#fff"></div>
<div class="abs" style="left:517px;top:694px;width:33px;height:33px;background:#9897fb"></div>
<svg style="left:517px;top:694px" width="33" height="33"><path d="M4 29L29 4" stroke="#7a79c9" stroke-width=".9"/></svg>
<div class="t" style="left:416px;top:739px;font-size:14.5px;font-weight:700;color:#111;letter-spacing:-.35px">SIZE</div>
<div class="abs" style="left:414px;top:768px;width:52px;height:41px;border:2px solid #111;background:#fff"></div>
<div class="t" style="left:414px;top:779px;width:52px;text-align:center;font-size:13px;color:#111">L</div>
<div class="abs" style="left:476px;top:769px;width:56px;height:39px;border:1px solid #dedede;background:#fff"></div>
<div class="t" style="left:476px;top:779px;width:56px;text-align:center;font-size:13px;color:#c9c9c9">M</div>
<svg style="left:476px;top:769px" width="56" height="39"><path d="M15 33L42 7" stroke="#c8c8c8" stroke-width=".9"/></svg>
<div class="abs" style="left:542px;top:769px;width:53px;height:39px;border:1px solid #dedede;background:#fff"></div>
<div class="t" style="left:542px;top:779px;width:53px;text-align:center;font-size:13px;color:#c9c9c9">S</div>
<svg style="left:542px;top:769px" width="53" height="39"><path d="M13 33L40 7" stroke="#c8c8c8" stroke-width=".9"/></svg>
<!-- floating round buttons -->
<div class="abs" style="left:1255px;top:601px;width:62px;height:62px;border-radius:50%;background:#4e515b"></div>
<div class="abs" style="left:1255px;top:670px;width:62px;height:62px;border-radius:50%;background:#4e515b"></div>
<div class="abs" style="left:1294px;top:724px;width:52px;height:52px;border-radius:50%;background:#f5d7a9"></div>
<!--FABICONS-->
<svg style="left:1274px;top:621px" width="24" height="24" viewBox="1274 621 24 24"><path d="M1276 624.2H1278.2Q1279 624.2 1279.2 625L1282.2 638.4" fill="none" stroke="#fff" stroke-width="1.3" stroke-linecap="round"/><circle cx="1281.6" cy="640.4" r="1.9" fill="#fff"/><path d="M1283.6 639.4L1295.4 636.6" stroke="#fff" stroke-width="1.4" stroke-linecap="round"/><path d="M1282.2 624.2L1290.2 622.6L1291.4 629L1283.4 630.6Z" fill="#fff"/><path d="M1282.6 631.6L1292.4 629.6L1293.6 635.6L1283.8 637.6Z" fill="#fff"/><path d="M1285.6 633.6L1289.4 632.8" stroke="#4e515b" stroke-width=".8"/></svg>
<svg style="left:1273px;top:689px" width="26" height="26" viewBox="1273 689 26 26"><path d="M1280.4 693.2H1278Q1275.8 693.2 1275.8 695.4V709.8Q1275.8 712 1278 712H1281.6" fill="none" stroke="#fff" stroke-width="1.2" stroke-linecap="round"/><path d="M1288.4 693.2H1290.8Q1293 693.2 1293 695.4V698.2" fill="none" stroke="#fff" stroke-width="1.2" stroke-linecap="round"/><rect x="1281" y="691" width="6.8" height="4.2" rx="1.2" fill="none" stroke="#fff" stroke-width="1.2"/><path d="M1279.4 699.6H1286.6M1279.4 703.8H1283.4" stroke="#fff" stroke-width="1.2" stroke-linecap="round"/><path d="M1285.2 708.6L1291.6 702.2Q1292.4 701.4 1293.2 702.2L1295 704Q1295.8 704.8 1295 705.6L1288.6 712L1284.6 712.6Z" fill="none" stroke="#fff" stroke-width="1.2" stroke-linejoin="round"/></svg>
<svg style="left:1310px;top:738px" width="22" height="24" viewBox="1310 738 22 24"><path d="M1320.5 739.2L1321.2 741L1323 741L1321.6 742.2L1322.1 744L1320.5 743L1318.9 744L1319.4 742.2L1318 741L1319.8 741Z" fill="#111"/><path d="M1312.8 755.4V749.4L1315.6 751.6L1320.5 745.4L1325.4 751.6L1328.2 749.4V755.4Z" fill="none" stroke="#111" stroke-width="1.5" stroke-linejoin="round"/><path d="M1312 759.2H1329" stroke="#111" stroke-width="1.5"/></svg>
<!--/FABICONS-->
<!-- sticky bar -->
<div class="abs" style="left:397px;top:822px;width:960px;height:72px;background:#fff"></div>
<div class="abs" style="left:416px;top:840px;width:119px;height:43px;border:1px solid #d3d3d3;border-radius:5px;background:#fff"></div>
<svg style="left:416px;top:840px" width="119" height="43"><path d="M10.5 21.5H21.5" stroke="#b9b9b9" stroke-width="1.2"/><path d="M97.5 21.5H108.5M103 16V27" stroke="#111" stroke-width="1.3"/></svg>
<div class="t" style="left:416px;top:851px;width:119px;text-align:center;font-size:14px;color:#111">1</div>
<div class="abs" style="left:551px;top:840px;width:319px;height:43px;border:1.7px solid #111;border-radius:5px;background:#fff"></div>
<div class="t" style="left:551px;top:852px;width:319px;text-align:center;font-size:16px;color:#111;letter-spacing:.37px">Add to cart</div>
<div class="abs" style="left:885px;top:839px;width:453px;height:45px;border-radius:4px;background:#000"></div>
<div class="t" style="left:885px;top:852px;width:453px;text-align:center;font-size:16.5px;color:#fff;letter-spacing:.25px">Buy now</div>
<div class="hl" style="left:382px;top:820px;width:988px;height:78px;z-index:6"></div>
</div>

<!-- ================= RIGHT PANEL ================= -->
<div id="right" class="abs"></div>
<div id="rp" class="abs" style="left:0;top:0;width:0;height:0">
<div class="abs" style="left:1375px;top:49px;width:325px;height:41px;background:#f5f6fa"></div>
<div class="t" style="left:1392px;top:60.2px;font-size:12.4px;color:#7a8499">商品详情<span style="margin:0 5.5px 0 6px;font-size:13.5px">/</span>...<span style="margin:0 5.5px 0 6px;font-size:13.5px">/</span>商品信息<span style="margin:0 5.5px 0 6px;font-size:13.5px">/</span><span style="color:#242833;font-weight:500">购买按钮组合</span></div>
<svg style="left:1662px;top:67px" width="18" height="5" viewBox="0 0 18 5"><circle cx="2.3" cy="2.5" r="1.1" fill="#2e3442"/><circle cx="8.7" cy="2.5" r="1.1" fill="#2e3442"/><circle cx="15.1" cy="2.5" r="1.1" fill="#2e3442"/></svg>
<div class="t" style="left:1392px;top:106px;font-size:14.5px;color:#1f2430">设置</div>
<svg style="left:1666px;top:111px" width="9" height="6" viewBox="0 0 8 5"><path d="M0 0H8L4 4.8Z" fill="#1f2430"/></svg>
<div class="t" style="left:1392px;top:159px;font-size:14.5px;color:#474f5e">移动端购买按钮位置</div>
<div class="abs" style="left:1375px;top:242px;width:325px;height:1px;background:#f0f1f5"></div>
<div class="abs" style="left:1375px;top:293px;width:325px;height:1px;background:#f0f1f5"></div>
<div class="abs" style="left:1392px;top:188px;width:292px;height:38px;border:1px solid #86a4f9;border-radius:4px;background:#fff;box-shadow:0 0 6px rgba(53,109,255,.22)"></div>
<div class="t" style="left:1404.5px;top:197px;font-size:14.5px;color:#b6bccb">悬浮吸底</div>
<svg style="left:1660px;top:203px" width="12" height="8" viewBox="0 0 12 8"><path d="M1 1.2L6 6.2L11 1.2" fill="none" stroke="#a9afbd" stroke-width="1.2"/></svg>
<div class="abs" style="left:1392px;top:228px;width:292px;height:122px;border:1px solid #e6e8ef;border-radius:5px;background:#fff;box-shadow:0 3px 10px rgba(60,70,100,.12)"></div>
<div class="t" style="left:1405px;top:241px;font-size:14.5px;color:#242833">页面内置</div>
<div class="t" style="left:1405px;top:278.5px;font-size:14.5px;color:#356dff">悬浮吸底</div>
<div class="t" style="left:1405px;top:316px;font-size:14.5px;color:#242833">页面内置加悬浮</div>
<div class="hl" style="left:1392px;top:262px;width:292px;height:46px;z-index:6"></div>
</div>

</div>
</body>
</html>
